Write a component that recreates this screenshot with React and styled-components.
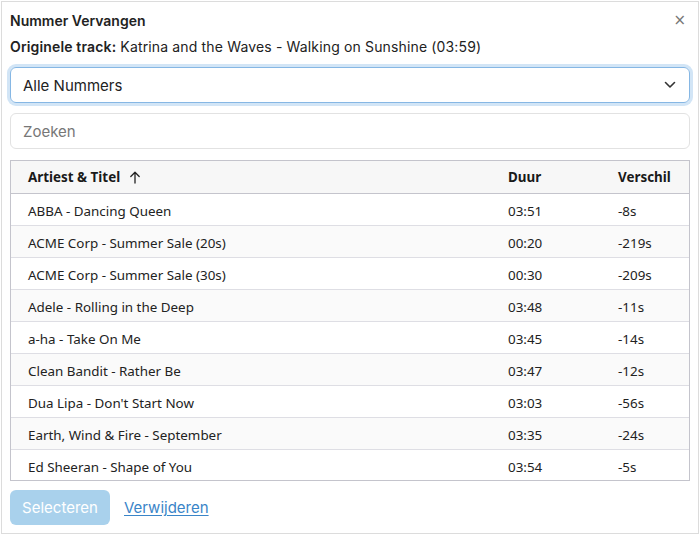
import React from 'react'
import styled, { createGlobalStyle } from 'styled-components'

const GlobalStyle = createGlobalStyle`
  html, body {
    margin: 0;
    padding: 0;
    background: #fff;
  }
  body {
    font-family: Inter, "Liberation Sans", sans-serif;
    color: #222;
  }
`

const Dialog = styled.div`
  margin: 1px;
  width: 698px;
  height: 533px;
  box-sizing: border-box;
  border: 1px solid #dcdcdc;
  padding: 6px 8px 0 8px;
  display: flex;
  flex-direction: column;
`

const Header = styled.div`
  display: flex;
  justify-content: space-between;
  align-items: center;
  height: 24px;
`

const Title = styled.div`
  font-size: 14px;
  font-weight: 600;
  color: #222;
`

const Close = styled.button`
  border: none;
  background: none;
  padding: 0;
  margin-right: 4px;
  color: #777;
  font-size: 15px;
  line-height: 1;
  cursor: pointer;
  font-family: "DejaVu Sans", sans-serif;
`

const Original = styled.div`
  font-size: 14px;
  letter-spacing: 0.15px;
  margin-top: 5px;
  height: 20px;
  line-height: 20px;
  color: #222;
  b {
    font-weight: 600;
  }
`

const SelectBox = styled.div`
  margin-top: 10px;
  height: 36px;
  flex-shrink: 0;
  box-sizing: border-box;
  border: 1px solid #86b7e4;
  box-shadow: 0 0 0 3px #d2e5f6;
  border-radius: 6px;
  display: flex;
  align-items: center;
  justify-content: space-between;
  padding: 0 13px 0 12px;
  font-size: 15px;
  color: #222;
`

const SearchBox = styled.input`
  margin-top: 10px;
  height: 36px;
  flex-shrink: 0;
  box-sizing: border-box;
  border: 1px solid #e2e2e2;
  border-radius: 6px;
  padding: 0 12px;
  font-size: 15px;
  font-family: Inter, "Liberation Sans", sans-serif;
  outline: none;
  &::placeholder {
    color: #777;
  }
`

const TableWrap = styled.div`
  margin-top: 11px;
  height: 321px;
  flex-shrink: 0;
  box-sizing: border-box;
  border: 1px solid #c4c4cc;
  overflow: hidden;
  font-family: "Noto Sans", "Open Sans", sans-serif;
  font-size: 13.4px;
`

const Table = styled.table`
  width: 100%;
  border-collapse: collapse;
  table-layout: fixed;
`

const Th = styled.th`
  text-align: left;
  font-weight: 700;
  color: #1a1a1a;
  background: #f7f7f7;
  height: 32px;
  padding: 0 0 0 ${p => p.$pad || 0}px;
  border-bottom: 1px solid #c4c4cc;
  width: ${p => p.$w ? p.$w + 'px' : 'auto'};
`

const Row = styled.tr`
  background: ${p => p.$odd ? '#fafafa' : '#fff'};
  border-bottom: 1px solid #dedee4;
`

const Td = styled.td`
  height: 29px;
  padding: 2px 0 0 ${p => p.$pad || 0}px;
  color: #222;
  white-space: nowrap;
`

const Arrow = styled.span`
  margin-left: 9px;
  display: inline-flex;
  vertical-align: -2px;
`

const Footer = styled.div`
  margin-top: 9px;
  display: flex;
  align-items: center;
  gap: 14px;
`

const SelectBtn = styled.button`
  width: 100px;
  height: 35px;
  border: none;
  border-radius: 6px;
  background: #a9d1ec;
  color: #fff;
  font-family: Inter, "Liberation Sans", sans-serif;
  font-size: 15px;
  padding: 0;
`

const LinkBtn = styled.a`
  color: #3a85c8;
  font-size: 15px;
  text-decoration: underline;
  text-underline-offset: 2px;
  cursor: pointer;
`

const tracks = [
  ['ABBA - Dancing Queen', '03:51', '-8s'],
  ['ACME Corp - Summer Sale (20s)', '00:20', '-219s'],
  ['ACME Corp - Summer Sale (30s)', '00:30', '-209s'],
  ['Adele - Rolling in the Deep', '03:48', '-11s'],
  ['a-ha - Take On Me', '03:45', '-14s'],
  ['Clean Bandit - Rather Be', '03:47', '-12s'],
  ['Dua Lipa - Don\'t Start Now', '03:03', '-56s'],
  ['Earth, Wind & Fire - September', '03:35', '-24s'],
  ['Ed Sheeran - Shape of You', '03:54', '-5s'],
]

const App = () => {
  return (
    <>
      <GlobalStyle />
      <Dialog>
        <Header>
          <Title>Nummer Vervangen</Title>
          <Close>×</Close>
        </Header>
        <Original>
          <b>Originele track:</b> Katrina and the Waves - Walking on Sunshine (03:59)
        </Original>
        <SelectBox>
          <span>Alle Nummers</span>
          <svg width="12" height="8" viewBox="0 0 12 8" fill="none" stroke="#333" strokeWidth="1.6" strokeLinecap="round" strokeLinejoin="round">
            <path d="M1.5 1.5 L6 6 L10.5 1.5" />
          </svg>
        </SelectBox>
        <SearchBox placeholder="Zoeken" />
        <TableWrap>
          <Table>
            <thead>
              <tr>
                <Th $pad={17}>
                  Artiest &amp; Titel
                  <Arrow>
                    <svg width="12" height="13" viewBox="0 0 12 13" fill="none" stroke="#222" strokeWidth="1.3" strokeLinecap="round" strokeLinejoin="round">
                      <path d="M6 12 V1.5 M1.8 5.5 L6 1.3 L10.2 5.5" />
                    </svg>
                  </Arrow>
                </Th>
                <Th $w={110}>Duur</Th>
                <Th $w={71}>Verschil</Th>
              </tr>
            </thead>
            <tbody>
              {tracks.map((t, i) => (
                <Row key={t[0]} $odd={i % 2 === 1}>
                  <Td $pad={17}>{t[0]}</Td>
                  <Td>{t[1]}</Td>
                  <Td>{t[2]}</Td>
                </Row>
              ))}
            </tbody>
          </Table>
        </TableWrap>
        <Footer>
          <SelectBtn>Selecteren</SelectBtn>
          <LinkBtn>Verwijderen</LinkBtn>
        </Footer>
      </Dialog>
    </>
  )
}

export default App
